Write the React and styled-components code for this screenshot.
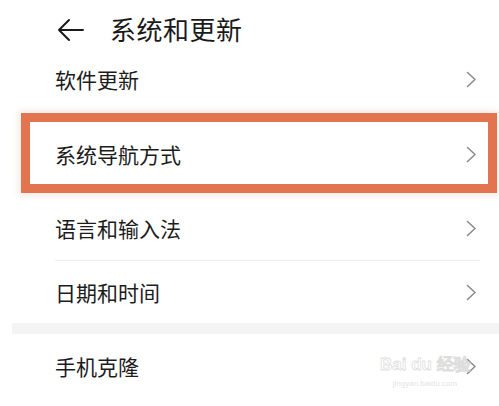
import React from 'react'
import styled, { createGlobalStyle } from 'styled-components'

const GlobalStyle = createGlobalStyle`
    html, body {
        margin: 0;
        padding: 0;
        background: #ffffff;
    }
    body {
        font-family: "Noto Sans CJK SC", "Noto Sans", sans-serif;
        color: #1c1c1c;
    }
`

const Page = styled.div`
    width: 499px;
    height: 406px;
    overflow: hidden;
    position: relative;
    background: #ffffff;
`

const Header = styled.div`
    height: 58px;
    display: flex;
    align-items: center;
    padding-left: 57px;
    gap: 26px;
`

const Back = styled.svg`
    width: 27px;
    height: 24px;
    margin-top: 2px;
`

const Title = styled.h1`
    margin: 0;
    font-size: 26px;
    font-weight: 400;
    letter-spacing: 0.5px;
    color: #1a1a1a;
    line-height: 1;
`

const Card = styled.div`
    margin-left: 12px;
    background: #ffffff;
`

const Row = styled.div`
    display: flex;
    align-items: center;
    justify-content: space-between;
    height: ${p => p.h}px;
    padding: ${p => p.pt || 0}px 22px 0 43px;
    box-sizing: border-box;
`

const Label = styled.span`
    font-size: 21px;
    line-height: 1;
    color: #1c1c1c;
`

const Highlight = styled.div`
    margin: 13px 2px 0 9px;
    height: 80px;
    box-sizing: border-box;
    border: 9px solid #e2744f;
    box-shadow: 0 0 6px 3px #f6ece6;
    display: flex;
    align-items: center;
    justify-content: space-between;
    padding: 3px 11px 0 25px;
`

const Divider = styled.div`
    height: 1px;
    background: #ececec;
    margin: 0 19px 0 43px;
`

const Band = styled.div`
    height: 11px;
    margin-left: 12px;
    background: #f4f4f4;
`

const Chevron = styled.svg`
    width: 11px;
    height: 17px;
    flex-shrink: 0;
`

const Mark = styled.div`
    position: absolute;
    left: 380px;
    top: 356px;
    width: 90px;
    color: rgba(205, 205, 205, 0.6);
    font-family: "Liberation Sans", sans-serif;
    text-align: center;
    white-space: nowrap;
    pointer-events: none;
`

const MarkTop = styled.div`
    font-size: 17px;
    font-weight: 700;
    line-height: 1.1;
    color: transparent;
    -webkit-text-stroke: 0.8px rgba(200, 200, 200, 0.6);
`

const MarkSub = styled.div`
    font-size: 8px;
    margin-top: 4px;
`

const Arrow = () => (
    <Chevron viewBox="0 0 11 17">
        <path d="M1.5 1.5 L9 8.5 L1.5 15.5" fill="none" stroke="#8c8c8c" strokeWidth="1.6" strokeLinecap="round" strokeLinejoin="round" />
    </Chevron>
)

const App = () => {
    return (
        <Page>
            <GlobalStyle />
            <Header>
                <Back viewBox="0 0 27 24">
                    <path d="M26 12 H2 M12 2 L2 12 L12 22" fill="none" stroke="#1a1a1a" strokeWidth="2" strokeLinecap="round" strokeLinejoin="round" />
                </Back>
                <Title>系统和更新</Title>
            </Header>
            <Card>
                <Row h={42}>
                    <Label>软件更新</Label>
                    <Arrow />
                </Row>
                <Highlight>
                    <Label>系统导航方式</Label>
                    <Arrow />
                </Highlight>
                <Row h={67} pt={3}>
                    <Label>语言和输入法</Label>
                    <Arrow />
                </Row>
                <Divider />
                <Row h={62}>
                    <Label>日期和时间</Label>
                    <Arrow />
                </Row>
            </Card>
            <Band />
            <Card>
                <Row h={64}>
                    <Label>手机克隆</Label>
                    <Arrow />
                </Row>
            </Card>
            <Mark>
                <MarkTop>Bai du 经验</MarkTop>
                <MarkSub>jingyan.baidu.com</MarkSub>
            </Mark>
        </Page>
    )
}

export default App
